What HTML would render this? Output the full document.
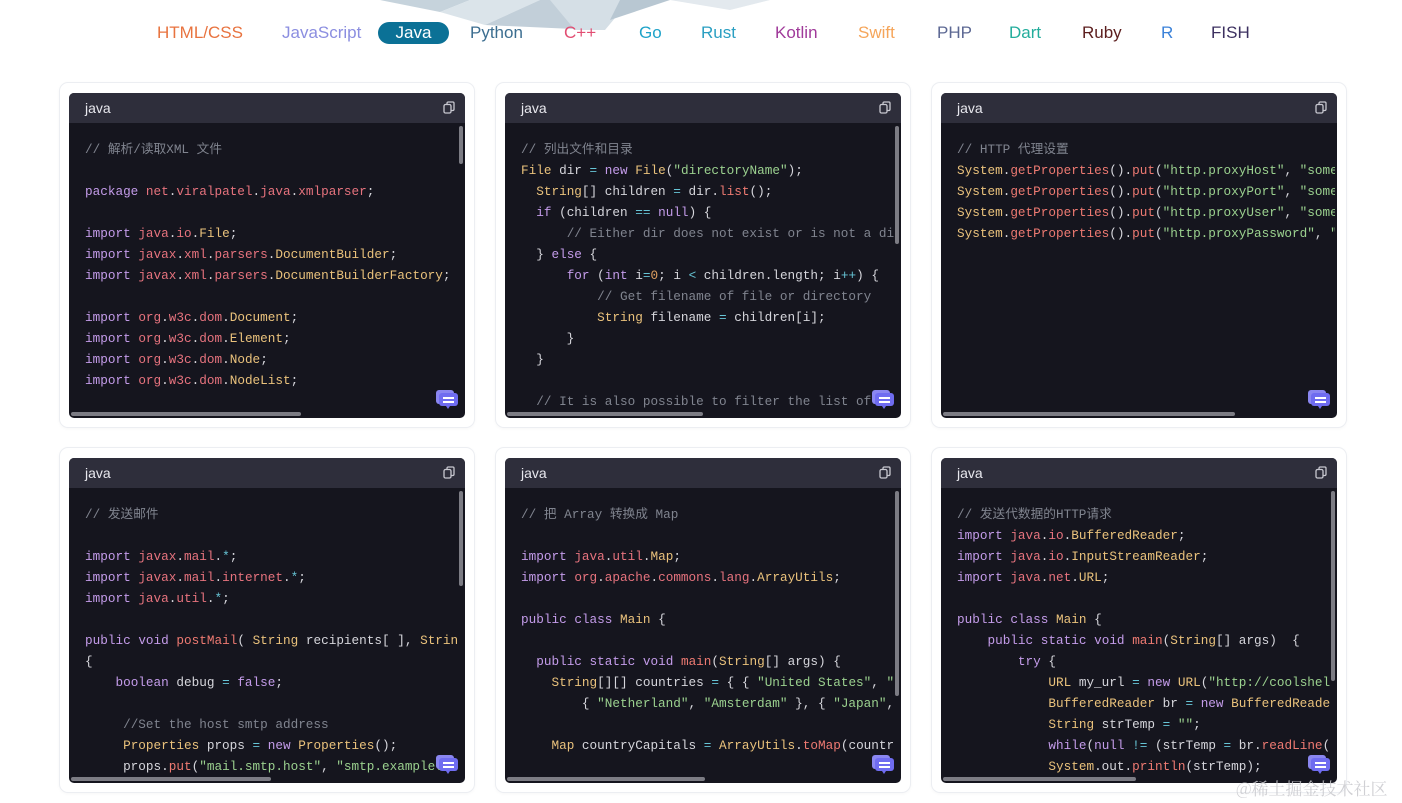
<!DOCTYPE html>
<html><head><meta charset="utf-8"><style>
*{margin:0;padding:0;box-sizing:border-box}
body{width:1402px;height:803px;background:#fff;position:relative;overflow:hidden;font-family:"Liberation Sans","Noto Sans CJK SC",sans-serif}
.nav{position:absolute;top:22px;left:0;width:1402px;height:22px;font-size:17px}
.nav span{position:absolute;top:0;line-height:22px;white-space:nowrap}
.nav .act{background:#0b7196;color:#fff;border-radius:11px;text-align:center;width:71px}
.card{position:absolute;width:416px;height:346px;border:1px solid #eceef2;border-radius:9px;background:#fff;box-shadow:0 1px 3px rgba(0,0,0,.03)}
.blk{position:absolute;left:9px;top:10px;width:396px;height:325px;background:#15151e;border-radius:5px;overflow:hidden}
.hd{height:30px;background:#2e2e3b;color:#e8e8ee;font-size:14px;line-height:30px;padding-left:16px}
.cp{position:absolute;right:10px;top:8px;width:12px;height:13px}
pre{position:absolute;left:16px;top:46px;width:373px;height:270px;overflow:hidden;font-family:"Liberation Mono","Noto Sans CJK SC",monospace;font-size:12.7px;line-height:21px;color:#d6d6dc;white-space:pre}
.vs{position:absolute;right:2px;top:33px;width:4px;border-radius:2px;background:#7c7c84}
.hs{position:absolute;left:2px;bottom:2px;height:4px;border-radius:2px;background:#7c7c84}
.ch{position:absolute;right:7px;bottom:8px}
.k{color:#c49cea}.p{color:#e7737e}.c{color:#eac27c}.s{color:#9bd18f}.m{color:#80848f}.f{color:#ee7a72}.o{color:#67c5d6}.n{color:#e0a060}
</style></head><body>
<svg style="position:absolute;left:340px;top:0" width="440" height="30" viewBox="0 0 440 30">
<polygon points="40,0 130,0 100,12" fill="#c6d3dc"/>
<polygon points="130,0 200,0 145,25 100,12" fill="#dbe4ea"/>
<polygon points="200,0 280,0 255,30 145,25" fill="#c2cfd9"/>
<polygon points="210,0 290,0 265,30 235,30" fill="#d5dfe6"/>
<polygon points="280,0 330,0 270,20" fill="#b8c7d2"/>
<polygon points="330,0 430,0 390,10" fill="#e3e9ee"/>
</svg>
<div class="nav">
<span style="left:157px;color:#e8733f">HTML/CSS</span>
<span style="left:282px;color:#8b8ee0">JavaScript</span>
<span class="act" style="left:378px">Java</span>
<span style="left:470px;color:#3c6e90">Python</span>
<span style="left:564px;color:#e24d72">C++</span>
<span style="left:639px;color:#1fa3c9">Go</span>
<span style="left:701px;color:#2a9fc2">Rust</span>
<span style="left:775px;color:#a03a9a">Kotlin</span>
<span style="left:858px;color:#f5a55a">Swift</span>
<span style="left:937px;color:#5c6893">PHP</span>
<span style="left:1009px;color:#23ad9c">Dart</span>
<span style="left:1082px;color:#5c1e1e">Ruby</span>
<span style="left:1161px;color:#3b82d9">R</span>
<span style="left:1211px;color:#3c3060">FISH</span>
</div>

<!-- card template pieces reused -->
<div class="card" style="left:59px;top:82px"><div class="blk"><div class="hd">java</div>
<svg class="cp" viewBox="0 0 12 13"><rect x="1" y="3.5" width="7" height="8.5" rx="1.5" fill="none" stroke="#c8c8d0" stroke-width="1.3"/><path d="M4 3V2.2A1.2 1.2 0 0 1 5.2 1H9.8A1.2 1.2 0 0 1 11 2.2V8.3A1.2 1.2 0 0 1 9.8 9.5H8.5" fill="none" stroke="#c8c8d0" stroke-width="1.3"/></svg>
<pre><span class="m">// 解析/读取XML 文件</span>

<span class="k">package</span> <span class="p">net</span>.<span class="p">viralpatel</span>.<span class="p">java</span>.<span class="p">xmlparser</span>;

<span class="k">import</span> <span class="p">java</span>.<span class="p">io</span>.<span class="c">File</span>;
<span class="k">import</span> <span class="p">javax</span>.<span class="p">xml</span>.<span class="p">parsers</span>.<span class="c">DocumentBuilder</span>;
<span class="k">import</span> <span class="p">javax</span>.<span class="p">xml</span>.<span class="p">parsers</span>.<span class="c">DocumentBuilderFactory</span>;

<span class="k">import</span> <span class="p">org</span>.<span class="p">w3c</span>.<span class="p">dom</span>.<span class="c">Document</span>;
<span class="k">import</span> <span class="p">org</span>.<span class="p">w3c</span>.<span class="p">dom</span>.<span class="c">Element</span>;
<span class="k">import</span> <span class="p">org</span>.<span class="p">w3c</span>.<span class="p">dom</span>.<span class="c">Node</span>;
<span class="k">import</span> <span class="p">org</span>.<span class="p">w3c</span>.<span class="p">dom</span>.<span class="c">NodeList</span>;</pre>
<div class="vs" style="height:38px"></div><div class="hs" style="width:230px"></div>
<svg class="ch" width="22" height="20" viewBox="0 0 22 20"><rect x="0" y="0" width="18" height="14" rx="3" fill="#8a86f0"/><rect x="3" y="3" width="19" height="13" rx="3" fill="#6f6cf0"/><path d="M10 16l2 3 2-3z" fill="#6f6cf0"/><rect x="7" y="7" width="11" height="2" fill="#fff"/><rect x="7" y="11" width="11" height="2" fill="#fff"/></svg>
</div></div>

<div class="card" style="left:495px;top:82px"><div class="blk"><div class="hd">java</div>
<svg class="cp" viewBox="0 0 12 13"><rect x="1" y="3.5" width="7" height="8.5" rx="1.5" fill="none" stroke="#c8c8d0" stroke-width="1.3"/><path d="M4 3V2.2A1.2 1.2 0 0 1 5.2 1H9.8A1.2 1.2 0 0 1 11 2.2V8.3A1.2 1.2 0 0 1 9.8 9.5H8.5" fill="none" stroke="#c8c8d0" stroke-width="1.3"/></svg>
<pre><span class="m">// 列出文件和目录</span>
<span class="c">File</span> dir <span class="o">=</span> <span class="k">new</span> <span class="c">File</span>(<span class="s">"directoryName"</span>);
  <span class="c">String</span>[] children <span class="o">=</span> dir.<span class="f">list</span>();
  <span class="k">if</span> (children <span class="o">==</span> <span class="k">null</span>) {
      <span class="m">// Either dir does not exist or is not a directory</span>
  } <span class="k">else</span> {
      <span class="k">for</span> (<span class="k">int</span> i<span class="o">=</span><span class="n">0</span>; i <span class="o">&lt;</span> children.length; i<span class="o">++</span>) {
          <span class="m">// Get filename of file or directory</span>
          <span class="c">String</span> filename <span class="o">=</span> children[i];
      }
  }

  <span class="m">// It is also possible to filter the list of</span></pre>
<div class="vs" style="height:118px"></div><div class="hs" style="width:196px"></div>
<svg class="ch" width="22" height="20" viewBox="0 0 22 20"><rect x="0" y="0" width="18" height="14" rx="3" fill="#8a86f0"/><rect x="3" y="3" width="19" height="13" rx="3" fill="#6f6cf0"/><path d="M10 16l2 3 2-3z" fill="#6f6cf0"/><rect x="7" y="7" width="11" height="2" fill="#fff"/><rect x="7" y="11" width="11" height="2" fill="#fff"/></svg>
</div></div>

<div class="card" style="left:931px;top:82px"><div class="blk"><div class="hd">java</div>
<svg class="cp" viewBox="0 0 12 13"><rect x="1" y="3.5" width="7" height="8.5" rx="1.5" fill="none" stroke="#c8c8d0" stroke-width="1.3"/><path d="M4 3V2.2A1.2 1.2 0 0 1 5.2 1H9.8A1.2 1.2 0 0 1 11 2.2V8.3A1.2 1.2 0 0 1 9.8 9.5H8.5" fill="none" stroke="#c8c8d0" stroke-width="1.3"/></svg>
<pre style="width:378px"><span class="m">// HTTP 代理设置</span>
<span class="c">System</span>.<span class="f">getProperties</span>().<span class="f">put</span>(<span class="s">"http.proxyHost"</span>, <span class="s">"someProxyURL"</span>);
<span class="c">System</span>.<span class="f">getProperties</span>().<span class="f">put</span>(<span class="s">"http.proxyPort"</span>, <span class="s">"someProxyPort"</span>);
<span class="c">System</span>.<span class="f">getProperties</span>().<span class="f">put</span>(<span class="s">"http.proxyUser"</span>, <span class="s">"someUserName"</span>);
<span class="c">System</span>.<span class="f">getProperties</span>().<span class="f">put</span>(<span class="s">"http.proxyPassword"</span>, <span class="s">"somePassword"</span>);</pre>
<div class="hs" style="width:292px"></div>
<svg class="ch" width="22" height="20" viewBox="0 0 22 20"><rect x="0" y="0" width="18" height="14" rx="3" fill="#8a86f0"/><rect x="3" y="3" width="19" height="13" rx="3" fill="#6f6cf0"/><path d="M10 16l2 3 2-3z" fill="#6f6cf0"/><rect x="7" y="7" width="11" height="2" fill="#fff"/><rect x="7" y="11" width="11" height="2" fill="#fff"/></svg>
</div></div>

<div class="card" style="left:59px;top:447px"><div class="blk"><div class="hd">java</div>
<svg class="cp" viewBox="0 0 12 13"><rect x="1" y="3.5" width="7" height="8.5" rx="1.5" fill="none" stroke="#c8c8d0" stroke-width="1.3"/><path d="M4 3V2.2A1.2 1.2 0 0 1 5.2 1H9.8A1.2 1.2 0 0 1 11 2.2V8.3A1.2 1.2 0 0 1 9.8 9.5H8.5" fill="none" stroke="#c8c8d0" stroke-width="1.3"/></svg>
<pre><span class="m">// 发送邮件</span>

<span class="k">import</span> <span class="p">javax</span>.<span class="p">mail</span>.<span class="o">*</span>;
<span class="k">import</span> <span class="p">javax</span>.<span class="p">mail</span>.<span class="p">internet</span>.<span class="o">*</span>;
<span class="k">import</span> <span class="p">java</span>.<span class="p">util</span>.<span class="o">*</span>;

<span class="k">public</span> <span class="k">void</span> <span class="f">postMail</span>( <span class="c">String</span> recipients[ ], <span class="c">String</span> subject,
{
    <span class="k">boolean</span> debug <span class="o">=</span> <span class="k">false</span>;

     <span class="m">//Set the host smtp address</span>
     <span class="c">Properties</span> props <span class="o">=</span> <span class="k">new</span> <span class="c">Properties</span>();
     props.<span class="f">put</span>(<span class="s">"mail.smtp.host"</span>, <span class="s">"smtp.example.com"</span>);</pre>
<div class="vs" style="height:95px"></div><div class="hs" style="width:200px"></div>
<svg class="ch" width="22" height="20" viewBox="0 0 22 20"><rect x="0" y="0" width="18" height="14" rx="3" fill="#8a86f0"/><rect x="3" y="3" width="19" height="13" rx="3" fill="#6f6cf0"/><path d="M10 16l2 3 2-3z" fill="#6f6cf0"/><rect x="7" y="7" width="11" height="2" fill="#fff"/><rect x="7" y="11" width="11" height="2" fill="#fff"/></svg>
</div></div>

<div class="card" style="left:495px;top:447px"><div class="blk"><div class="hd">java</div>
<svg class="cp" viewBox="0 0 12 13"><rect x="1" y="3.5" width="7" height="8.5" rx="1.5" fill="none" stroke="#c8c8d0" stroke-width="1.3"/><path d="M4 3V2.2A1.2 1.2 0 0 1 5.2 1H9.8A1.2 1.2 0 0 1 11 2.2V8.3A1.2 1.2 0 0 1 9.8 9.5H8.5" fill="none" stroke="#c8c8d0" stroke-width="1.3"/></svg>
<pre><span class="m">// 把 Array 转换成 Map</span>

<span class="k">import</span> <span class="p">java</span>.<span class="p">util</span>.<span class="c">Map</span>;
<span class="k">import</span> <span class="p">org</span>.<span class="p">apache</span>.<span class="p">commons</span>.<span class="p">lang</span>.<span class="c">ArrayUtils</span>;

<span class="k">public</span> <span class="k">class</span> <span class="c">Main</span> {

  <span class="k">public</span> <span class="k">static</span> <span class="k">void</span> <span class="f">main</span>(<span class="c">String</span>[] args) {
    <span class="c">String</span>[][] countries <span class="o">=</span> { { <span class="s">"United States"</span>, <span class="s">"New York"</span> },
        { <span class="s">"Netherland"</span>, <span class="s">"Amsterdam"</span> }, { <span class="s">"Japan"</span>, <span class="s">"Tokyo"</span> },

    <span class="c">Map</span> countryCapitals <span class="o">=</span> <span class="c">ArrayUtils</span>.<span class="f">toMap</span>(countries);</pre>
<div class="vs" style="height:205px"></div><div class="hs" style="width:198px"></div>
<svg class="ch" width="22" height="20" viewBox="0 0 22 20"><rect x="0" y="0" width="18" height="14" rx="3" fill="#8a86f0"/><rect x="3" y="3" width="19" height="13" rx="3" fill="#6f6cf0"/><path d="M10 16l2 3 2-3z" fill="#6f6cf0"/><rect x="7" y="7" width="11" height="2" fill="#fff"/><rect x="7" y="11" width="11" height="2" fill="#fff"/></svg>
</div></div>

<div class="card" style="left:931px;top:447px"><div class="blk"><div class="hd">java</div>
<svg class="cp" viewBox="0 0 12 13"><rect x="1" y="3.5" width="7" height="8.5" rx="1.5" fill="none" stroke="#c8c8d0" stroke-width="1.3"/><path d="M4 3V2.2A1.2 1.2 0 0 1 5.2 1H9.8A1.2 1.2 0 0 1 11 2.2V8.3A1.2 1.2 0 0 1 9.8 9.5H8.5" fill="none" stroke="#c8c8d0" stroke-width="1.3"/></svg>
<pre><span class="m">// 发送代数据的HTTP请求</span>
<span class="k">import</span> <span class="p">java</span>.<span class="p">io</span>.<span class="c">BufferedReader</span>;
<span class="k">import</span> <span class="p">java</span>.<span class="p">io</span>.<span class="c">InputStreamReader</span>;
<span class="k">import</span> <span class="p">java</span>.<span class="p">net</span>.<span class="c">URL</span>;

<span class="k">public</span> <span class="k">class</span> <span class="c">Main</span> {
    <span class="k">public</span> <span class="k">static</span> <span class="k">void</span> <span class="f">main</span>(<span class="c">String</span>[] args)  {
        <span class="k">try</span> {
            <span class="c">URL</span> my_url <span class="o">=</span> <span class="k">new</span> <span class="c">URL</span>(<span class="s">"http://coolshell.cn/"</span>);
            <span class="c">BufferedReader</span> br <span class="o">=</span> <span class="k">new</span> <span class="c">BufferedReader</span>(
            <span class="c">String</span> strTemp <span class="o">=</span> <span class="s">""</span>;
            <span class="k">while</span>(<span class="k">null</span> <span class="o">!=</span> (strTemp <span class="o">=</span> br.<span class="f">readLine</span>()))
            <span class="c">System</span>.out.<span class="f">println</span>(strTemp);</pre>
<div class="vs" style="height:190px"></div><div class="hs" style="width:193px"></div>
<svg class="ch" width="22" height="20" viewBox="0 0 22 20"><rect x="0" y="0" width="18" height="14" rx="3" fill="#8a86f0"/><rect x="3" y="3" width="19" height="13" rx="3" fill="#6f6cf0"/><path d="M10 16l2 3 2-3z" fill="#6f6cf0"/><rect x="7" y="7" width="11" height="2" fill="#fff"/><rect x="7" y="11" width="11" height="2" fill="#fff"/></svg>
</div></div>

<div style="position:absolute;left:1236px;top:775px;font-size:17px;color:rgba(200,200,205,.85);font-family:'Noto Serif CJK SC','Liberation Serif',serif">@稀土掘金技术社区</div>
</body></html>
